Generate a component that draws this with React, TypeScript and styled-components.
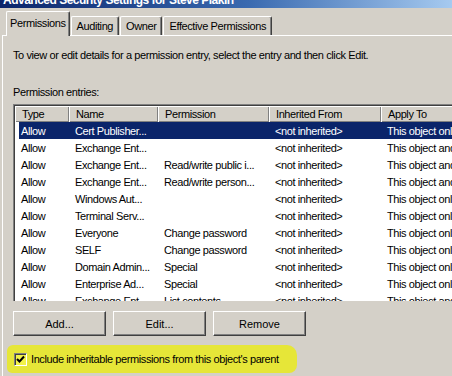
import styled, { createGlobalStyle } from "styled-components";

const GlobalStyle = createGlobalStyle`
  html, body {
    margin: 0;
    padding: 0;
    background-color: #d4d0c8;
    overflow: hidden;
  }

  body {
    font-family: "Liberation Sans", Arial, sans-serif;
    font-size: 11px;
    letter-spacing: -0.4px;
    color: #000;
  }
`;

const Window = styled.div`
  width: 452px;
  height: 376px;
  overflow: hidden;
  background-color: #d4d0c8;
`;

const TitleBar = styled.div`
  height: 8px;
  overflow: hidden;
  background: linear-gradient(to right, #0a246a 0%, #3a6ab0 55%, #a6caf0 100%);
`;

const TitleText = styled.div`
  margin-top: -6px;
  padding-left: 3px;
  font-size: 12px;
  line-height: 13px;
  font-weight: bold;
  letter-spacing: -0.5px;
  color: #fff;
  white-space: nowrap;
`;

const TabStrip = styled.div`
  display: flex;
  align-items: flex-end;
  height: 27px;
  padding-left: 6px;
`;

const Tab = styled.div<{ $active?: boolean }>`
  position: relative;
  display: flex;
  align-items: center;
  justify-content: center;
  height: ${(p) => (p.$active ? "22px" : "18px")};
  padding: ${(p) => (p.$active ? "0 3px 2px" : "0 5px")};
  margin-right: 1px;
  margin-bottom: ${(p) => (p.$active ? "-1px" : "0")};
  z-index: ${(p) => (p.$active ? 1 : 0)};
  background-color: #d4d0c8;
  border-top: 1px solid #fff;
  border-left: 1px solid #fff;
  border-right: 1px solid #404040;
  border-radius: 2px 2px 0 0;
  box-shadow: inset -1px 0 0 #808080;
  white-space: nowrap;
`;

const Panel = styled.div`
  margin-left: 2px;
  padding: 12px 0 0 10px;
  border-top: 1px solid #fff;
  border-left: 1px solid #fff;
  height: 340px;
`;

const Label = styled.div<{ $gap?: number }>`
  margin-top: ${(p) => p.$gap ?? 0}px;
  line-height: 14px;
  white-space: nowrap;
`;

const ListView = styled.div`
  width: 520px;
  height: 195px;
  margin-top: 5px;
  overflow: hidden;
  background-color: #fff;
  border-top: 1px solid #808080;
  border-left: 1px solid #808080;
  box-shadow: inset 1px 1px 0 #404040;
  padding: 1px 0 0 1px;
`;

const columns = "54px 89px 111px 112px 1fr";

const HeaderRow = styled.div`
  display: grid;
  grid-template-columns: ${columns};
  height: 16px;
`;

const HeaderCell = styled.div`
  display: flex;
  align-items: center;
  padding-left: 7px;
  background-color: #d4d0c8;
  box-shadow: inset 1px 1px 0 #fff, inset -1px -1px 0 #808080;
  white-space: nowrap;
`;

const Row = styled.div<{ $selected?: boolean }>`
  display: grid;
  grid-template-columns: 50px 89px 111px 112px 1fr;
  height: 17px;
  margin-left: 4px;
  background-color: ${(p) => (p.$selected ? "#0a246a" : "transparent")};
  color: ${(p) => (p.$selected ? "#fff" : "#000")};
`;

const Cell = styled.div`
  display: flex;
  align-items: center;
  padding-left: 6px;
  white-space: nowrap;
  overflow: hidden;

  &:first-child {
    padding-left: 2px;
  }
`;

const ButtonRow = styled.div`
  display: flex;
  gap: 7px;
  margin-top: 10px;
`;

const Button = styled.button`
  width: 93px;
  height: 25px;
  padding: 0;
  font: inherit;
  color: #000;
  background-color: #d4d0c8;
  border: 1px solid;
  border-color: #fff #404040 #404040 #fff;
  box-shadow: inset -1px -1px 0 #808080;
`;

const Highlight = styled.div`
  display: flex;
  align-items: center;
  gap: 4px;
  width: 283px;
  height: 28px;
  margin: 9px 0 0 -6px;
  padding-left: 7px;
  background-color: #e6e638;
  border-radius: 6px 10px 8px 5px;
  white-space: nowrap;
`;

const CheckBox = styled.span`
  display: flex;
  align-items: center;
  justify-content: center;
  width: 11px;
  height: 11px;
  background-color: #f2f24a;
  border-top: 1px solid #808080;
  border-left: 1px solid #808080;
  border-right: 1px solid #fff;
  border-bottom: 1px solid #fff;
  box-shadow: inset 1px 1px 0 #404040;
`;

const rows = [
  ["Allow", "Cert Publisher...", "", "<not inherited>", "This object only"],
  ["Allow", "Exchange Ent...", "", "<not inherited>", "This object and all"],
  ["Allow", "Exchange Ent...", "Read/write public i...", "<not inherited>", "This object and all"],
  ["Allow", "Exchange Ent...", "Read/write person...", "<not inherited>", "This object and all"],
  ["Allow", "Windows Aut...", "", "<not inherited>", "This object only"],
  ["Allow", "Terminal Serv...", "", "<not inherited>", "This object only"],
  ["Allow", "Everyone", "Change password", "<not inherited>", "This object only"],
  ["Allow", "SELF", "Change password", "<not inherited>", "This object only"],
  ["Allow", "Domain Admin...", "Special", "<not inherited>", "This object only"],
  ["Allow", "Enterprise Ad...", "Special", "<not inherited>", "This object only"],
  ["Allow", "Exchange Ent...", "List contents", "<not inherited>", "This object and all"],
];

const headers = ["Type", "Name", "Permission", "Inherited From", "Apply To"];
const tabs = ["Permissions", "Auditing", "Owner", "Effective Permissions"];

const App = () => {
  return (
    <Window>
      <GlobalStyle />
      <TitleBar>
        <TitleText>Advanced Security Settings for Steve Plakin</TitleText>
      </TitleBar>
      <TabStrip>
        {tabs.map((t, i) => (
          <Tab key={t} $active={i === 0}>
            {t}
          </Tab>
        ))}
      </TabStrip>
      <Panel>
        <Label>
          To view or edit details for a permission entry, select the entry and then click Edit.
        </Label>
        <Label $gap={23}>Permission entries:</Label>
        <ListView>
          <HeaderRow>
            {headers.map((h) => (
              <HeaderCell key={h}>{h}</HeaderCell>
            ))}
          </HeaderRow>
          {rows.map((r, i) => (
            <Row key={i} $selected={i === 0}>
              {r.map((c, j) => (
                <Cell key={j}>{c}</Cell>
              ))}
            </Row>
          ))}
        </ListView>
        <ButtonRow>
          <Button type="button">Add...</Button>
          <Button type="button">Edit...</Button>
          <Button type="button">Remove</Button>
        </ButtonRow>
        <Highlight>
          <CheckBox>
            <svg width="9" height="9" viewBox="0 0 9 9">
              <path d="M1 4 L3.5 6.5 L8 1.5" fill="none" stroke="#000" strokeWidth="2" />
            </svg>
          </CheckBox>
          Include inheritable permissions from this object's parent
        </Highlight>
      </Panel>
    </Window>
  );
};

export default App;
